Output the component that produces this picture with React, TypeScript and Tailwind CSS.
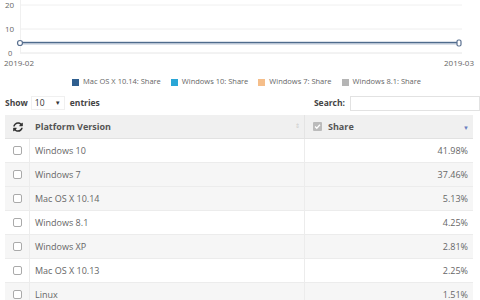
import React from "react";

const rows = [
  { name: "Windows 10", share: "41.98%", bg: "bg-white" },
  { name: "Windows 7", share: "37.46%", bg: "bg-[#f6f6f6]" },
  { name: "Mac OS X 10.14", share: "5.13%", bg: "bg-[#f6f6f6]" },
  { name: "Windows 8.1", share: "4.25%", bg: "bg-white" },
  { name: "Windows XP", share: "2.81%", bg: "bg-[#f6f6f6]" },
  { name: "Mac OS X 10.13", share: "2.25%", bg: "bg-white" },
  { name: "Linux", share: "1.51%", bg: "bg-[#f6f6f6]" },
];

function Chart() {
  return (
    <svg width="480" height="72" viewBox="0 0 480 72" className="block">
      <line x1="20" y1="5" x2="462" y2="5" stroke="#f0f0f0" strokeWidth="1" />
      <line x1="20" y1="29" x2="462" y2="29" stroke="#eeeeee" strokeWidth="1" />
      <line x1="20" y1="53" x2="462" y2="53" stroke="#e6e6e6" strokeWidth="1" />
      <line x1="20.5" y1="0" x2="20.5" y2="53" stroke="#f0f0f0" strokeWidth="1" />
      <text x="5" y="8" fontSize="8" fill="#666" fontFamily="Open Sans, sans-serif">20</text>
      <text x="5" y="32" fontSize="8" fill="#666" fontFamily="Open Sans, sans-serif">10</text>
      <text x="8" y="56" fontSize="7.5" fill="#666" fontFamily="Open Sans, sans-serif">0</text>
      <text x="4" y="66" fontSize="8" fill="#666" fontFamily="Open Sans, sans-serif">2019-02</text>
      <text x="444" y="66" fontSize="8" fill="#666" fontFamily="Open Sans, sans-serif">2019-03</text>
      <line x1="20" y1="43" x2="459" y2="43" stroke="#b8c4d4" strokeWidth="3" />
      <line x1="20" y1="42.5" x2="459" y2="42.5" stroke="#4f6b8c" strokeWidth="1.2" />
      <circle cx="20" cy="43" r="2.5" fill="#fff" stroke="#5a7090" strokeWidth="1.2" />
      <rect x="457" y="40" width="4" height="6" rx="1.5" fill="#fff" stroke="#5a7090" strokeWidth="1.2" />
    </svg>
  );
}

function LegendItem({ color, label }: { color: string; label: string }) {
  return (
    <div className="flex items-center gap-[4px]">
      <span className={`inline-block w-[7px] h-[7px] ${color}`} />
      <span className="text-[7.5px] text-[#666]">{label}</span>
    </div>
  );
}

function Checkbox() {
  return <span className="inline-block w-[9px] h-[9px] border border-[#aaa] rounded-[2px] bg-white" />;
}

export default function App() {
  return (
    <div
      className="w-[480px] h-[300px] overflow-hidden bg-white"
      style={{ fontFamily: '"Open Sans", sans-serif' }}
    >
      <Chart />
      <div className="flex items-center gap-[10px] pl-[72px] h-[18px] mt-[1px]">
        <LegendItem color="bg-[#2f5f8f]" label="Mac OS X 10.14: Share" />
        <LegendItem color="bg-[#2aa6d6]" label="Windows 10: Share" />
        <LegendItem color="bg-[#f5be8a]" label="Windows 7: Share" />
        <LegendItem color="bg-[#b5b5b5]" label="Windows 8.1: Share" />
      </div>
      <div className="flex items-center justify-between pl-[5px] mt-[5px] h-[14px]">
        <div className="flex items-center text-[8.5px] font-bold text-[#444]">
          <span>Show</span>
          <span className="ml-[3px] w-[34px] h-[14px] flex items-center justify-between px-[3px] font-normal text-[#333] border border-[#f0f0f0]">
            <span>10</span>
            <span className="text-[6px]">▼</span>
          </span>
          <span className="ml-[5px]">entries</span>
        </div>
        <div className="flex items-center text-[8.5px] font-bold text-[#444]">
          <span>Search:</span>
          <span className="ml-[5px] w-[130px] h-[15px] border border-[#e2e2e2] bg-white" />
        </div>
      </div>
      <div className="ml-[5px] w-[468px] mt-[5px]">
        <div className="grid grid-cols-[25px_275px_168px] h-[24px] bg-[#f0f0f0] border-b border-[#e2e2e2] text-[9px] font-bold text-[#555]">
          <div className="flex items-center justify-center">
            <svg width="10" height="10" viewBox="0 0 512 512">
              <path
                fill="#333"
                d="M370.72 133.28C339.458 104.008 298.888 87.962 255.848 88c-77.458.068-144.328 53.178-162.791 126.85-1.344 5.363-6.122 9.15-11.651 9.15H24.103c-7.498 0-13.194-6.807-11.807-14.176C33.933 94.924 134.813 8 256 8c66.448 0 126.791 26.136 171.315 68.685L463.03 40.97C478.149 25.851 504 36.559 504 57.941V192c0 13.255-10.745 24-24 24H345.941c-21.382 0-32.09-25.851-16.971-40.971l41.75-41.749zM32 296h134.059c21.382 0 32.09 25.851 16.971 40.971l-41.75 41.75c31.262 29.273 71.835 45.319 114.876 45.28 77.418-.07 144.315-53.144 162.787-126.849 1.344-5.363 6.122-9.150 11.651-9.150h57.304c7.498 0 13.194 6.807 11.807 14.176C478.067 417.076 377.187 504 256 504c-66.448 0-126.791-26.136-171.315-68.685L48.97 471.03C33.851 486.149 8 475.441 8 454.059V320c0-13.255 10.745-24 24-24z"
              />
            </svg>
          </div>
          <div className="flex items-center justify-between pl-[5px] pr-[4px] border-r border-[#e4e4e4]">
            <span>Platform Version</span>
            <span className="text-[6px] text-[#ccc] font-normal">⇕</span>
          </div>
          <div className="flex items-center justify-between pl-[8px] pr-[4px]">
            <div className="flex items-center gap-[6px]">
              <span className="w-[9px] h-[9px] bg-[#bbb] rounded-[1px] flex items-center justify-center">
                <svg width="7" height="7" viewBox="0 0 10 10">
                  <path d="M1.5 5 L4 7.5 L8.5 2.5" stroke="#fff" strokeWidth="1.8" fill="none" />
                </svg>
              </span>
              <span>Share</span>
            </div>
            <span className="text-[6px] text-[#6a7fc0] mt-[4px]">▼</span>
          </div>
        </div>
        {rows.map((r) => (
          <div
            key={r.name}
            className={`grid grid-cols-[25px_275px_168px] h-[24px] border-b border-[#ececec] text-[9px] text-[#666] ${r.bg}`}
          >
            <div className="flex items-center justify-center border-r border-[#ececec]">
              <Checkbox />
            </div>
            <div className="flex items-center pl-[5px] border-r border-[#ececec]">{r.name}</div>
            <div className="flex items-center justify-end pr-[5px]">{r.share}</div>
          </div>
        ))}
      </div>
    </div>
  );
}
